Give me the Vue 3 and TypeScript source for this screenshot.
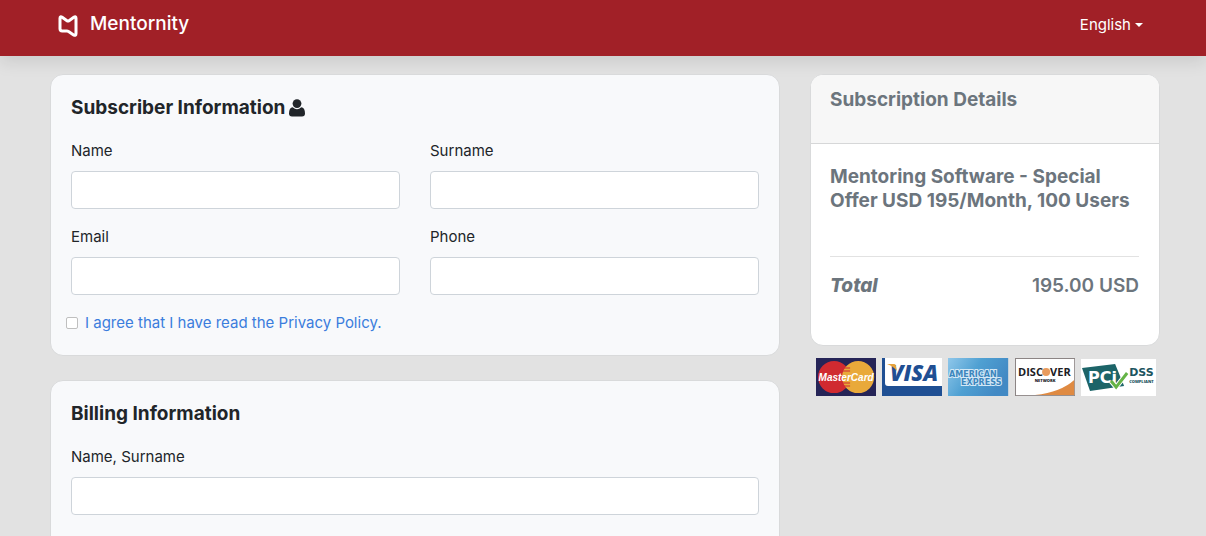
<script setup lang="ts">
import { ref, reactive } from 'vue'

interface Field {
  id: string
  label: string
  type: string
}

const fields: Field[] = [
  { id: 'name', label: 'Name', type: 'text' },
  { id: 'surname', label: 'Surname', type: 'text' },
  { id: 'email', label: 'Email', type: 'email' },
  { id: 'phone', label: 'Phone', type: 'tel' },
]

const subscriber = reactive<Record<string, string>>({ name: '', surname: '', email: '', phone: '' })
const billingName = ref('')
const agreed = ref(false)
</script>

<template>
  <div class="page">
    <header class="navbar">
      <a class="brand" href="#">
        <svg class="brand-mark" viewBox="0 0 20 24" aria-hidden="true">
          <path d="M2 4.2 Q2 1.8 4.2 3.2 L9 6.7 Q10 7.4 11 6.7 L15.8 3.2 Q18 1.8 18 4.2 V19.5 Q18 22.3 15.6 20.9 L10.6 17.6 Q9.8 17 8.8 17 H4.2 Q2 17 2 14.8 Z" />
        </svg>
        <span>Mentornity</span>
      </a>
      <button class="language" type="button" aria-haspopup="true">English<span class="caret"></span></button>
    </header>

    <main class="content">
      <form class="forms">
        <section class="card form-card">
          <h5 class="title">
            Subscriber Information
            <svg class="user" viewBox="0 0 16 18" aria-hidden="true">
              <circle cx="8" cy="4.6" r="4.4" />
              <path d="M3.7 8.3 Q8 12 12.3 8.3 Q16 8.8 16 14.5 Q16 17.5 13 17.5 H3 Q0 17.5 0 14.5 Q0 8.8 3.7 8.3 Z" />
            </svg>
          </h5>
          <div class="fields">
            <div v-for="field in fields" :key="field.id" class="field">
              <label :for="field.id">{{ field.label }}</label>
              <input :id="field.id" v-model="subscriber[field.id]" :type="field.type" />
            </div>
          </div>
          <div class="consent">
            <input id="agree" v-model="agreed" type="checkbox" />
            <label for="agree"><a href="#">I agree that I have read the Privacy Policy.</a></label>
          </div>
        </section>

        <section class="card form-card billing">
          <h5 class="title">Billing Information</h5>
          <div class="field">
            <label for="billing-name">Name, Surname</label>
            <input id="billing-name" v-model="billingName" type="text" />
          </div>
        </section>
      </form>

      <aside class="summary">
        <section class="card details">
          <div class="details-head"><h5>Subscription Details</h5></div>
          <div class="details-body">
            <h5>Mentoring Software - Special Offer USD 195/Month, 100 Users</h5>
            <div class="total">
              <em>Total</em>
              <span>195.00 USD</span>
            </div>
          </div>
        </section>

        <div class="logos">
          <svg class="logo" viewBox="0 0 60 38" role="img" aria-label="MasterCard">
            <rect width="60" height="38" fill="#252457" />
            <circle cx="18" cy="19" r="16" fill="#d02a30" />
            <circle cx="42" cy="19" r="16" fill="#e9a93a" />
            <path d="M26 10H34M26 13H34M26 25H34M26 28H34" stroke="#d02a30" />
            <text class="mc" x="30" y="23" text-anchor="middle">MasterCard</text>
          </svg>
          <svg class="logo" viewBox="0 0 60 38" role="img" aria-label="Visa">
            <rect width="60" height="38" fill="#1f4f93" />
            <path d="M3 0H60V28H6Q3 28 3 25Z" fill="#fff" />
            <text class="visa" x="32" y="23" text-anchor="middle">VISA</text>
            <path d="M5 6H12Q14 6 14 9L15 13Q11 8 5 6Z" fill="#e7a33b" />
          </svg>
          <svg class="logo" viewBox="0 0 60 38" role="img" aria-label="American Express">
            <defs>
              <linearGradient id="amex" x1="0" y1="0" x2="1" y2="0.4">
                <stop offset="0" stop-color="#8fc7ea" />
                <stop offset="0.5" stop-color="#4fa0d2" />
                <stop offset="1" stop-color="#4289c4" />
              </linearGradient>
            </defs>
            <rect width="60" height="38" fill="url(#amex)" />
            <text class="amex" x="1" y="19">AMERICAN</text>
            <text class="amex" x="13" y="27">EXPRESS</text>
          </svg>
          <svg class="logo" viewBox="0 0 60 38" role="img" aria-label="Discover Network">
            <rect x="0.5" y="0.5" width="59" height="37" fill="#fff" stroke="#8c8585" />
            <path d="M20 37Q46 34 59 22V37Z" fill="#df8a42" />
            <circle cx="31" cy="14" r="4" fill="#e89a5c" />
            <text class="discover" x="3" y="18">DISC</text>
            <text class="discover" x="35" y="18">VER</text>
            <text class="network" x="30" y="24" text-anchor="middle">NETWORK</text>
          </svg>
          <svg class="logo wide" viewBox="0 0 75 37" role="img" aria-label="PCI DSS Compliant">
            <rect width="75" height="37" fill="#fff" />
            <path d="M1 9L34 5L43 27L9 32Z" fill="#1c6468" />
            <text class="pci" x="7" y="24">PCi</text>
            <path d="M30 22L35 28L46 14" fill="none" stroke="#fff" stroke-width="5" />
            <path d="M30 22L35 28L46 14" fill="none" stroke="#65b346" stroke-width="3" />
            <text class="dss" x="48" y="17">DSS</text>
            <text class="compliant" x="48" y="24">COMPLIANT</text>
          </svg>
        </div>
      </aside>
    </main>
  </div>
</template>

<style>
html {
  scrollbar-width: none;
}
body {
  margin: 0;
  background: #e2e2e2;
}
</style>

<style scoped>
* {
  box-sizing: border-box;
}
.page {
  font: 400 15px/24px Inter, "Liberation Sans", sans-serif;
  color: #212529;
}
.navbar {
  display: flex;
  justify-content: space-between;
  align-items: center;
  height: 56px;
  padding: 0 63px 8px 58px;
  background: #a12027;
  box-shadow: 0 6px 16px rgba(0, 0, 0, 0.1);
}
.brand {
  display: flex;
  align-items: center;
  gap: 12px;
  color: #fff;
  font-size: 19px;
  font-weight: 500;
  text-decoration: none;
}
.brand-mark {
  width: 20px;
  height: 24px;
  margin-top: 4px;
  fill: none;
  stroke: #fff;
  stroke-width: 3;
}
.language {
  display: flex;
  align-items: center;
  gap: 4px;
  padding: 2px 0 0;
  border: 0;
  background: none;
  color: #fff;
  font: inherit;
}
.caret {
  border: 4px solid transparent;
  border-top-color: #fff;
  border-bottom: 0;
}
.content {
  display: grid;
  grid-template-columns: 730fr 350fr;
  gap: 30px;
  align-items: start;
  padding: 18px 46px 0 50px;
}
.forms {
  display: grid;
  gap: 24px;
}
.card {
  border: 1px solid #d9dadb;
  border-radius: 13px;
  background: #fff;
  overflow: hidden;
}
.form-card {
  padding: 21px 20px 20px;
  background: #f8f9fb;
}
.billing {
  padding-bottom: 48px;
}
h5 {
  margin: 0;
  font-size: 19px;
  line-height: 24px;
  font-weight: 700;
}
.title {
  display: flex;
  align-items: center;
  gap: 4px;
  margin-bottom: 19px;
}
.user {
  width: 16px;
  height: 18px;
  fill: #212529;
}
.fields {
  display: grid;
  grid-template-columns: 1fr 1fr;
  gap: 16px 30px;
}
.field {
  display: grid;
  gap: 8px;
}
.field input {
  width: 100%;
  height: 38px;
  padding: 6px 12px;
  border: 1px solid #ced4da;
  border-radius: 4px;
  background: #fff;
  font: inherit;
}
.consent {
  display: flex;
  align-items: center;
  gap: 7px;
  margin: 16px 0 0 -5px;
}
.consent input {
  appearance: none;
  width: 12px;
  height: 12px;
  margin: 0;
  border: 1px solid #bfbfbf;
  border-radius: 2px;
  background: #fff;
}
.consent input:checked {
  background: #3b7ddd;
}
.consent a {
  color: #3b7ddd;
  text-decoration: none;
}
.details {
  color: #6c757d;
}
.details-head {
  padding: 13px 19px 31px;
  border-bottom: 1px solid #d6d7d8;
  background: #f7f7f7;
}
.details-body {
  padding: 21px 20px 47px 19px;
}
.total {
  display: flex;
  justify-content: space-between;
  margin-top: 43px;
  padding-top: 17px;
  border-top: 1px solid #e2e2e2;
  font-size: 19px;
  font-weight: 600;
}
.total em {
  font-weight: 800;
}
.logos {
  display: flex;
  align-items: center;
  gap: 6px;
  padding: 12px 4px 0 6px;
}
.logo {
  flex: 60 1 0;
  min-width: 0;
}
.wide {
  flex-grow: 75;
}
.logo text {
  font-family: "Open Sans", "Liberation Sans", sans-serif;
  font-weight: 800;
}
.logo .mc {
  font-size: 10px;
  font-style: italic;
  font-family: "Liberation Sans", sans-serif;
  fill: #fff;
}
.logo .visa {
  font-size: 22px;
  font-style: italic;
  fill: #1f4f93;
}
.logo .amex {
  font-family: "DejaVu Sans", sans-serif;
  font-size: 8px;
  fill: #3c86bd;
  stroke: #d3e8f6;
  stroke-width: 2;
  paint-order: stroke;
}
.logo .discover {
  font-size: 11px;
  font-weight: 700;
  fill: #202024;
}
.logo .network {
  font-size: 4px;
  fill: #202024;
}
.logo .pci {
  font-family: "DejaVu Sans", sans-serif;
  font-size: 16px;
  fill: #fff;
}
.logo .dss {
  font-family: "DejaVu Sans", sans-serif;
  font-size: 11px;
  fill: #1c5560;
}
.logo .compliant {
  font-size: 4px;
  fill: #1c5560;
}
</style>
